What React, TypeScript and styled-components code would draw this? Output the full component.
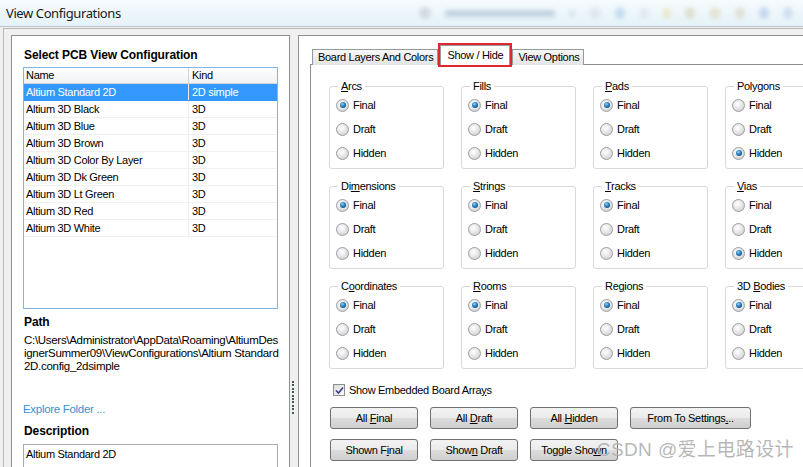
import React from 'react'
import styled, { createGlobalStyle } from 'styled-components'

const GlobalStyle = createGlobalStyle`
  html, body {
    margin: 0;
    padding: 0;
    background: #f0f0f0;
    overflow: hidden;
  }
  body {
    font-family: 'Liberation Sans', Arial, sans-serif;
    font-size: 11px;
    letter-spacing: -0.3px;
    color: #000;
  }
  * {
    box-sizing: border-box;
  }
`

const Window = styled.div`
  position: relative;
  width: 803px;
  height: 467px;
  display: flex;
  flex-direction: column;
  overflow: hidden;
  background: #f0f0f0;
`

const TitleBar = styled.div`
  flex: none;
  height: 27px;
  display: flex;
  align-items: center;
  padding-left: 6px;
  background: linear-gradient(#f6fbfd, #e4f2f7);
  border-bottom: 1px solid #b9c5c8;
`

const Title = styled.span`
  font-family: 'Noto Sans', 'Open Sans', sans-serif;
  font-size: 13px;
  letter-spacing: -0.4px;
  color: #1a1a1a;
`

const GhostStrip = styled.div`
  margin-left: auto;
  margin-right: 10px;
  display: flex;
  align-items: center;
  gap: 14px;
  opacity: 0.25;
  filter: blur(2px);
`

const Ghost = styled.span<{ w: number; c: string; round?: boolean }>`
  display: block;
  width: ${({ w }) => w}px;
  height: ${({ round }) => (round ? 12 : 7)}px;
  border-radius: ${({ round }) => (round ? '50%' : '2px')};
  background: ${({ c }) => c};
`

const Frame = styled.div`
  flex: 1;
  min-height: 0;
  display: flex;
  margin: 1px 0 0 3px;
  padding: 6px 0 0 7px;
  border-left: 1px solid #b8b8b8;
  border-top: 1px solid #b8b8b8;
`

const LeftPanel = styled.div`
  flex: none;
  width: 279px;
  display: flex;
  flex-direction: column;
  padding: 12px 0 0 11px;
  background: #fff;
  border: 1px solid #8e8f8f;
  border-bottom: none;
`

const Heading = styled.div<{ gap?: number }>`
  margin: ${({ gap }) => gap || 0}px 0 0 1px;
  font-weight: bold;
  font-size: 12px;
  letter-spacing: -0.1px;
  line-height: 14px;
`

const ListBox = styled.div`
  margin-top: 5px;
  width: 255px;
  height: 242px;
  border: 1px solid #84b4e0;
  background: #fff;
`

const ListRow = styled.div<{ header?: boolean; selected?: boolean }>`
  display: grid;
  grid-template-columns: 165px 1fr;
  height: ${({ header }) => (header ? 16 : 17)}px;
  line-height: ${({ header }) => (header ? 15 : 16)}px;
  background: ${({ header, selected }) =>
    header
      ? 'linear-gradient(#ffffff, #f1f2f4)'
      : selected
      ? '#3399ff'
      : '#fff'};
  color: ${({ selected }) => (selected ? '#fff' : '#000')};
  border-bottom: 1px solid ${({ header, selected }) =>
    header ? '#d5d5d5' : selected ? '#3399ff' : '#f0f0f0'};
`

const Cell = styled.span<{ first?: boolean; header?: boolean }>`
  padding-left: ${({ first }) => (first ? 2 : 3)}px;
  white-space: nowrap;
  overflow: hidden;
  border-right: ${({ first, header }) =>
    first ? `1px solid ${header ? '#d5d5d5' : '#ececec'}` : 'none'};
`

const PathText = styled.div`
  margin: 5px 0 0 1px;
  line-height: 13px;
  font-size: 11.5px;
  white-space: pre-line;
`

const Link = styled.div`
  margin-top: 30px;
  line-height: 13px;
  font-size: 11.5px;
  color: #3b8fd8;
`

const DescriptionBox = styled.div`
  margin-top: 6px;
  width: 255px;
  flex: 1;
  padding: 2px 2px;
  line-height: 15px;
  border: 1px solid #acacac;
  border-bottom: none;
`

const Splitter = styled.div`
  flex: none;
  width: 8px;
  padding: 346px 0 0 2px;
`

const Grip = styled.div`
  width: 2px;
  height: 33px;
  background: repeating-linear-gradient(#3d5c4f 0 2px, transparent 2px 3.4px);
`

const RightPanel = styled.div`
  flex: 1;
  min-width: 0;
  display: flex;
  flex-direction: column;
  padding: 9px 0 0 11px;
  background: #fff;
  border-left: 1px solid #8e8f8f;
  border-top: 1px solid #8e8f8f;
  overflow: hidden;
`

const TabStrip = styled.div`
  position: relative;
  z-index: 2;
  display: flex;
  align-items: flex-end;
  height: 20px;
  margin: 0 0 -1px 2px;
`

const Tab = styled.div<{ active?: boolean }>`
  height: ${({ active }) => (active ? 20 : 16)}px;
  padding: ${({ active }) => (active ? '2px 6px 0' : '0 4px 0 5px')};
  margin: ${({ active }) => (active ? '0 2px' : '0')};
  line-height: 15px;
  white-space: nowrap;
  border: 1px solid #919b9c;
  border-bottom: none;
  background: ${({ active }) =>
    active ? '#fff' : 'linear-gradient(#f7f7f7, #e4e4e4)'};
  outline: ${({ active }) => (active ? '2px solid #e0262e' : 'none')};
  outline-offset: 0;
`

const TabPage = styled.div`
  flex: 1;
  width: 620px;
  padding: 15px 0 0 18px;
  border: 1px solid #8c8c8c;
  border-bottom: none;
  border-right: none;
`

const GroupGrid = styled.div`
  display: grid;
  grid-template-columns: repeat(4, 115px);
  column-gap: 17px;
  row-gap: 11px;
`

const Group = styled.fieldset`
  margin: 0;
  min-width: 0;
  padding: 0 0 3px 6px;
  border: 1px solid #d6dadd;
  border-radius: 3px;
`

const Legend = styled.legend`
  margin-left: 2px;
  padding: 0 3px;
  line-height: 13px;
`

const RadioRow = styled.div`
  height: 24px;
  display: flex;
  align-items: center;
  gap: 4px;
`

const RadioDot = styled.span<{ checked?: boolean }>`
  position: relative;
  width: 13px;
  height: 13px;
  border-radius: 50%;
  border: 1px solid #9a9ea3;
  background: radial-gradient(circle at 40% 35%, #ffffff 0%, #e8e8e8 45%, #c4c4c4 100%);

  &::after {
    content: '';
    display: ${({ checked }) => (checked ? 'block' : 'none')};
    position: absolute;
    left: 2.5px;
    top: 2.5px;
    width: 6px;
    height: 6px;
    border-radius: 50%;
    background: radial-gradient(circle at 40% 35%, #8fd0f5 0%, #1f74b4 50%, #0c3e6a 100%);
  }
`

const CheckRow = styled.div`
  margin: 14px 0 0 4px;
  height: 14px;
  display: flex;
  align-items: center;
  gap: 4px;
`

const CheckBox = styled.span`
  width: 12px;
  height: 12px;
  display: flex;
  align-items: center;
  justify-content: center;
  border: 1px solid #8f8f8f;
  background: linear-gradient(135deg, #dcdcdc, #fafafa);
`

const ButtonRow = styled.div<{ gap: number }>`
  margin: ${({ gap }) => gap}px 0 0 1px;
  display: flex;
  gap: 12px;
`

const Button = styled.div<{ wide?: boolean }>`
  width: ${({ wide }) => (wide ? 121 : 88)}px;
  height: 22px;
  display: flex;
  align-items: center;
  justify-content: center;
  border: 1px solid #707070;
  border-radius: 3px;
  background: linear-gradient(#f2f2f2 0%, #ebebeb 50%, #dddddd 51%, #cfcfcf 100%);
  white-space: nowrap;
`

const Watermark = styled.div`
  position: absolute;
  right: 9px;
  bottom: 6px;
  font-family: 'Liberation Sans', 'Noto Sans CJK SC', sans-serif;
  font-size: 19px;
  letter-spacing: 0.4px;
  color: rgba(110, 110, 110, 0.5);
  text-shadow: 0 0 1px rgba(255, 255, 255, 0.9);
  pointer-events: none;
`

function Key({ text, at }: { text: string; at?: number }) {
  if (at === undefined) return <span>{text}</span>
  return (
    <span>
      {text.slice(0, at)}
      <u>{text[at]}</u>
      {text.slice(at + 1)}
    </span>
  )
}

const configs = [
  ['Altium Standard 2D', '2D simple'],
  ['Altium 3D Black', '3D'],
  ['Altium 3D Blue', '3D'],
  ['Altium 3D Brown', '3D'],
  ['Altium 3D Color By Layer', '3D'],
  ['Altium 3D Dk Green', '3D'],
  ['Altium 3D Lt Green', '3D'],
  ['Altium 3D Red', '3D'],
  ['Altium 3D White', '3D'],
]

const groups: { label: string; key?: number; mode: number }[] = [
  { label: 'Arcs', key: 0, mode: 0 },
  { label: 'Fills', mode: 0 },
  { label: 'Pads', key: 0, mode: 0 },
  { label: 'Polygons', mode: 2 },
  { label: 'Dimensions', key: 2, mode: 0 },
  { label: 'Strings', key: 0, mode: 0 },
  { label: 'Tracks', key: 0, mode: 0 },
  { label: 'Vias', key: 0, mode: 2 },
  { label: 'Coordinates', key: 1, mode: 0 },
  { label: 'Rooms', key: 0, mode: 0 },
  { label: 'Regions', key: 2, mode: 0 },
  { label: '3D Bodies', key: 3, mode: 0 },
]

const modes = ['Final', 'Draft', 'Hidden']

const configPath =
  'C:\\Users\\Administrator\\AppData\\Roaming\\AltiumDes\nignerSummer09\\ViewConfigurations\\Altium Standard\n2D.config_2dsimple'

export default function App() {
  return (
    <Window>
      <GlobalStyle />
      <TitleBar>
        <Title>View Configurations</Title>
        <GhostStrip>
          <Ghost w={12} c="#7d8a96" round />
          <Ghost w={110} c="#4a6e9c" />
          <Ghost w={6} c="#8fb0d0" />
          <Ghost w={12} c="#b8c4c8" round />
          <Ghost w={10} c="#4f8fd6" round />
          <Ghost w={10} c="#c0c8cc" round />
          <Ghost w={8} c="#e0c050" round />
          <Ghost w={10} c="#b0a050" round />
          <Ghost w={12} c="#d0b070" round />
          <Ghost w={10} c="#c0a080" round />
          <Ghost w={10} c="#5a7ed6" round />
          <Ghost w={10} c="#7a9ad8" round />
        </GhostStrip>
      </TitleBar>

      <Frame>
        <LeftPanel>
          <Heading>Select PCB View Configuration</Heading>
          <ListBox>
            <ListRow header>
              <Cell first header>Name</Cell>
              <Cell header>Kind</Cell>
            </ListRow>
            {configs.map(([name, kind], i) => (
              <ListRow key={name} selected={i === 0}>
                <Cell first>{name}</Cell>
                <Cell>{kind}</Cell>
              </ListRow>
            ))}
          </ListBox>

          <Heading gap={6}>Path</Heading>
          <PathText>{configPath}</PathText>

          <Link>Explore Folder ...</Link>
          <Heading gap={8}>Description</Heading>
          <DescriptionBox>Altium Standard 2D</DescriptionBox>
        </LeftPanel>

        <Splitter>
          <Grip />
        </Splitter>

        <RightPanel>
          <TabStrip>
            <Tab>Board Layers And Colors</Tab>
            <Tab active>Show / Hide</Tab>
            <Tab>View Options</Tab>
          </TabStrip>
          <TabPage>
            <GroupGrid>
              {groups.map((g) => (
                <Group key={g.label}>
                  <Legend>
                    <Key text={g.label} at={g.key} />
                  </Legend>
                  {modes.map((m, i) => (
                    <RadioRow key={m}>
                      <RadioDot checked={i === g.mode} />
                      {m}
                    </RadioRow>
                  ))}
                </Group>
              ))}
            </GroupGrid>

            <CheckRow>
              <CheckBox>
                <svg width="9" height="9" viewBox="0 0 9 9">
                  <path d="M1 4.5 L3.5 7 L8 1.5" fill="none" stroke="#3b3b8f" strokeWidth="1.6" />
                </svg>
              </CheckBox>
              <Key text="Show Embedded Board Arrays" at={24} />
            </CheckRow>

            <ButtonRow gap={10}>
              <Button><Key text="All Final" at={4} /></Button>
              <Button><Key text="All Draft" at={4} /></Button>
              <Button><Key text="All Hidden" at={4} /></Button>
              <Button wide><Key text="From To Settings..." at={16} /></Button>
            </ButtonRow>
            <ButtonRow gap={10}>
              <Button><Key text="Shown Final" at={7} /></Button>
              <Button><Key text="Shown Draft" at={4} /></Button>
              <Button><Key text="Toggle Shown" at={10} /></Button>
            </ButtonRow>
          </TabPage>
        </RightPanel>
      </Frame>

      <Watermark>CSDN @爱上电路设计</Watermark>
    </Window>
  )
}
